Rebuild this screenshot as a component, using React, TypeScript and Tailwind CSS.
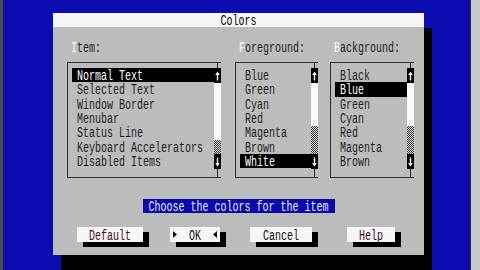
import React from "react";

const items = [
  "Normal Text",
  "Selected Text",
  "Window Border",
  "Menubar",
  "Status Line",
  "Keyboard Accelerators",
  "Disabled Items",
];
const fore = ["Blue", "Green", "Cyan", "Red", "Magenta", "Brown", "White"];
const back = ["Black", "Blue", "Green", "Cyan", "Red", "Magenta", "Brown"];

const Txt = ({ children }: { children: React.ReactNode }) => (
  <span className="inline-block scale-y-[1.4] translate-y-[2px] whitespace-pre">{children}</span>
);

const Arrow = ({ down }: { down?: boolean }) => (
  <svg width="5" height="10" viewBox="0 0 5 10" className={down ? "rotate-180" : ""}>
    <path d="M2.5 0.5 L4.8 4 L3.2 4 L3.2 9.5 L1.8 9.5 L1.8 4 L0.2 4 Z" fill="#fff" />
  </svg>
);

const ScrollBar = ({ track, thumb }: { track: number; thumb: number }) => (
  <div className="w-[7px] flex flex-col">
    <div className="h-[5px] flex justify-center">
      <div className="w-px bg-[#2a2a2a]" />
    </div>
    <div className="h-[15px] bg-black flex items-center justify-center">
      <Arrow />
    </div>
    <div className="bg-[#fafafa]" style={{ height: track }} />
    <div
      className="bg-[repeating-conic-gradient(#3a3a3a_0_25%,#d8d8d8_0_50%)] bg-[length:2px_2px]"
      style={{ height: thumb }}
    />
    <div className="h-[15px] bg-black flex items-center justify-center">
      <Arrow down />
    </div>
    <div className="flex-1 flex justify-center">
      <div className="w-px bg-[#2a2a2a]" />
    </div>
  </div>
);

const ListBox = ({
  rows,
  selected,
  width,
  track,
  thumb,
}: {
  rows: string[];
  selected: number;
  width: string;
  track: number;
  thumb: number;
}) => (
  <div className={`flex h-[116px] border-y border-l border-[#2a2a2a] ${width}`}>
    <div className="flex-1 pt-[5px]">
      {rows.map((r, i) => (
        <div
          key={r}
          className={`h-[14.3px] ml-[4px] pl-[5px] flex items-center ${
            i === selected ? "bg-black text-white" : "text-[#1c1c1c]"
          }`}
        >
          <Txt>{r}</Txt>
        </div>
      ))}
    </div>
    <ScrollBar track={track} thumb={thumb} />
  </div>
);

const Label = ({ hot, rest }: { hot: string; rest: string }) => (
  <div className="h-[14px] pl-[4px] flex items-center">
    <Txt>
      <span className="text-white">{hot}</span>
      <span className="text-[#1c1c1c]">{rest}</span>
    </Txt>
  </div>
);

const Tri = ({ left }: { left?: boolean }) => (
  <svg width="4" height="7" viewBox="0 0 4 7">
    <path d={left ? "M4 0 L0 3.5 L4 7 Z" : "M0 0 L4 3.5 L0 7 Z"} fill="#111" />
  </svg>
);

const Button = ({
  width,
  margin,
  children,
}: {
  width: string;
  margin: string;
  children: React.ReactNode;
}) => (
  <div
    className={`h-[15px] bg-[#f6f6f6] shadow-[6px_5px_0_#000] flex items-center justify-center ${width} ${margin}`}
  >
    {children}
  </div>
);

export default function App() {
  return (
    <div className="w-[480px] h-[270px] bg-[#0c0cb0] flex overflow-hidden font-['Liberation_Mono',monospace] text-[10px] leading-none">
      <div className="w-[3px] bg-[#4a4a4a]" />
      <div className="flex-1 pl-[50px] pt-[13px]">
        <div className="w-[371px] h-[242px] bg-[#bcbcbc] shadow-[8px_15px_0_#000] flex flex-col">
          <div className="h-[14px] bg-[#f6f6f6] flex items-center justify-center text-black">
            <Txt>Colors</Txt>
          </div>

          <div className="flex pl-[14px] pt-[13px]">
            <div className="flex flex-col">
              <Label hot="I" rest="tem:" />
              <div className="mt-[8px]">
                <ListBox rows={items} selected={0} width="w-[154px]" track={57} thumb={14} />
              </div>
            </div>
            <div className="flex flex-col ml-[14px]">
              <Label hot="F" rest="oreground:" />
              <div className="mt-[8px]">
                <ListBox rows={fore} selected={6} width="w-[83px]" track={43} thumb={28} />
              </div>
            </div>
            <div className="flex flex-col ml-[12px]">
              <Label hot="B" rest="ackground:" />
              <div className="mt-[8px]">
                <ListBox rows={back} selected={1} width="w-[84px]" track={43} thumb={28} />
              </div>
            </div>
          </div>

          <div className="mt-[21px] mx-auto w-[192px] h-[14px] bg-[#0a0aa8] text-[#e4ecff] flex items-center justify-center">
            <Txt>Choose the colors for the item</Txt>
          </div>

          <div className="mt-[14px] flex pl-[24px]">
            <Button width="w-[66px]" margin="">
              <span className="text-[#4a0c1c]">
                <Txt>Default</Txt>
              </span>
            </Button>
            <Button width="w-[50px]" margin="ml-[27px]">
              <div className="flex-1 flex items-center justify-between px-[3px] text-[#111]">
                <Tri />
                <Txt>OK</Txt>
                <Tri left />
              </div>
            </Button>
            <Button width="w-[62px]" margin="ml-[30px]">
              <span className="text-[#10101c]">
                <Txt>Cancel</Txt>
              </span>
            </Button>
            <Button width="w-[48px]" margin="ml-[35px]">
              <span className="text-[#3a0c1c]">
                <Txt>Help</Txt>
              </span>
            </Button>
          </div>
        </div>
      </div>
      <div className="w-px bg-[#303040]" />
      <div className="w-[9px] bg-[#c8c8d0]" />
    </div>
  );
}
